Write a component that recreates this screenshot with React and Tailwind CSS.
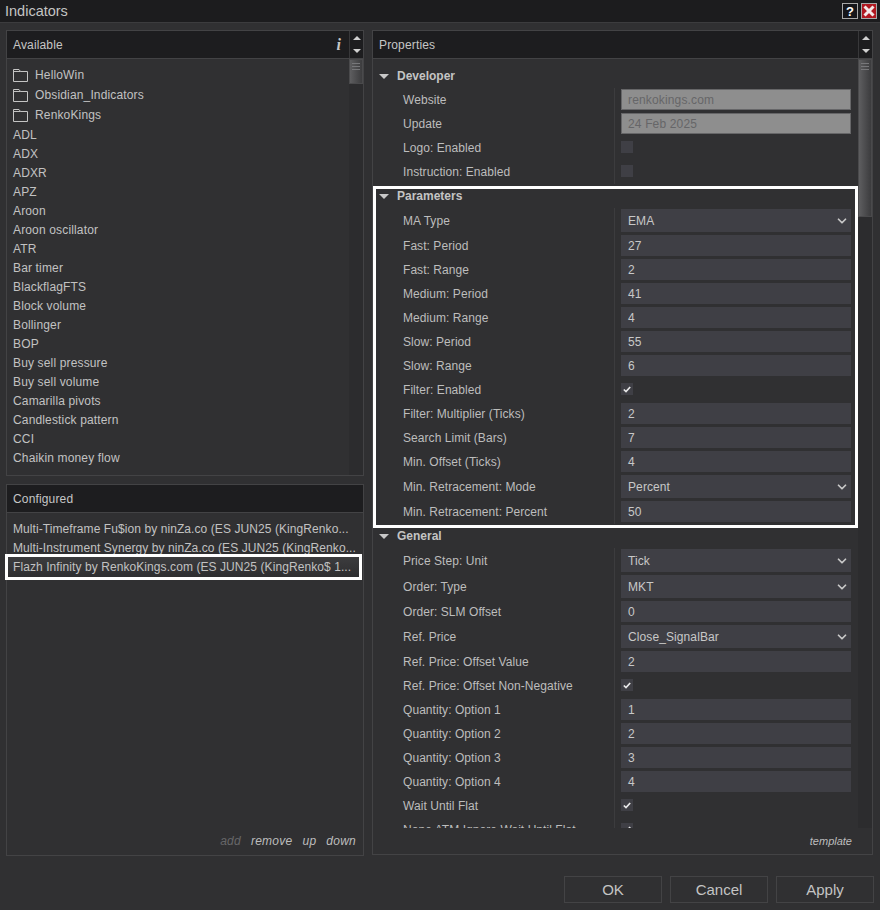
import { ChevronDown } from "lucide-react";

const available = [
  "ADL", "ADX", "ADXR", "APZ", "Aroon", "Aroon oscillator", "ATR", "Bar timer", "BlackflagFTS",
  "Block volume", "Bollinger", "BOP", "Buy sell pressure", "Buy sell volume", "Camarilla pivots",
  "Candlestick pattern", "CCI", "Chaikin money flow",
];

const developer = [
  { label: "Website", type: "disabled", value: "renkokings.com" },
  { label: "Update", type: "disabled", value: "24 Feb 2025" },
  { label: "Logo: Enabled", type: "check" },
  { label: "Instruction: Enabled", type: "check" },
];

const parameters = [
  { label: "MA Type", type: "select", value: "EMA" },
  { label: "Fast: Period", value: "27" },
  { label: "Fast: Range", value: "2" },
  { label: "Medium: Period", value: "41" },
  { label: "Medium: Range", value: "4" },
  { label: "Slow: Period", value: "55" },
  { label: "Slow: Range", value: "6" },
  { label: "Filter: Enabled", type: "check", checked: true },
  { label: "Filter: Multiplier (Ticks)", value: "2" },
  { label: "Search Limit (Bars)", value: "7" },
  { label: "Min. Offset (Ticks)", value: "4" },
  { label: "Min. Retracement: Mode", type: "select", value: "Percent" },
  { label: "Min. Retracement: Percent", value: "50" },
];

const general = [
  { label: "Price Step: Unit", type: "select", value: "Tick" },
  { label: "Order: Type", type: "select", value: "MKT" },
  { label: "Order: SLM Offset", value: "0" },
  { label: "Ref. Price", type: "select", value: "Close_SignalBar" },
  { label: "Ref. Price: Offset Value", value: "2" },
  { label: "Ref. Price: Offset Non-Negative", type: "check", checked: true },
  { label: "Quantity: Option 1", value: "1" },
  { label: "Quantity: Option 2", value: "2" },
  { label: "Quantity: Option 3", value: "3" },
  { label: "Quantity: Option 4", value: "4" },
  { label: "Wait Until Flat", type: "check", checked: true },
  { label: "None ATM Ignore Wait Until Flat", type: "check", checked: true },
];

function FolderIcon() {
  return (
    <svg width="15" height="14" viewBox="0 0 15 14" fill="none" stroke="#c4c4c4" strokeWidth="1" className="shrink-0">
      <path d="M0.5 13.5V1.5H6L7.5 3.5H14.5V13.5Z" />
      <path d="M0.5 3.5H7.5" />
    </svg>
  );
}

function Triangle() {
  return <div className="w-0 h-0 border-x-[5px] border-x-transparent border-t-[5px] border-t-[#c8c8c8]" />;
}

function ScrollArrows() {
  return (
    <div className="w-[14px] shrink-0 border-l border-[#38383a] flex flex-col items-center justify-center gap-[9px]">
      <div className="w-0 h-0 border-x-[4px] border-x-transparent border-b-[4px] border-b-[#d0d0d0]" />
      <div className="w-0 h-0 border-x-[4px] border-x-transparent border-t-[4px] border-t-[#d0d0d0]" />
    </div>
  );
}

function Thumb({ height }) {
  return (
    <div className="w-[14px] shrink-0 bg-[#2c2c2e]">
      <div
        className="w-[14px] border border-[#4a4a4c] bg-gradient-to-r from-[#5e5e60] to-[#3c3c3e] flex flex-col items-center gap-[2px] pt-[3px]"
        style={{ height }}
      >
        <div className="w-[8px] h-px bg-[#77777a]" />
        <div className="w-[8px] h-px bg-[#77777a]" />
        <div className="w-[8px] h-px bg-[#77777a]" />
      </div>
    </div>
  );
}

function PanelHeader({ title, arrows, children }) {
  return (
    <div className="h-[28px] shrink-0 flex bg-[#1d1d1f] border-b border-[#434345]">
      <div className="flex-1 flex items-center justify-between pl-[6px] pr-[8px] text-[#c6c6c6] tracking-[0.15px]">{title}{children}</div>
      {arrows && <ScrollArrows />}
    </div>
  );
}

function Value({ row }) {
  if (row.type === "check") {
    return (
      <div className="w-[12px] h-[12px] mb-[1px] bg-[#3f3f45] flex items-center justify-center">
        {row.checked && (
          <svg width="8" height="7" viewBox="0 0 8 7" fill="none" stroke="#e8e8e8" strokeWidth="1.7">
            <path d="M0.8 3.5L3 5.6L7.2 1" />
          </svg>
        )}
      </div>
    );
  }
  if (row.type === "disabled") {
    return (
      <div className="w-[230px] h-[21px] bg-[#8e8e8e] border border-[#666668] pl-[6px] flex items-center text-[#666668] tracking-[0.15px]">
        {row.value}
      </div>
    );
  }
  if (row.type === "select") {
    return (
      <div className="w-[230px] h-[23px] bg-[#3f3f45] pl-[7px] pr-[2px] flex items-center justify-between text-[#c8c8c8] tracking-[0.1px]">
        {row.value}
        <ChevronDown size={14} strokeWidth={3} color="#c8c8c8" />
      </div>
    );
  }
  return <div className="w-[230px] h-[21px] bg-[#3f3f45] pl-[7px] flex items-center text-[#c8c8c8]">{row.value}</div>;
}

function Row({ row }) {
  return (
    <div className={`flex items-stretch ${row.type === "select" ? "h-[26px]" : "h-[24px]"}`}>
      <div className="w-[241px] shrink-0 pl-[30px] flex items-center text-[#bdbdbd] whitespace-nowrap tracking-[0.06px]">{row.label}</div>
      <div className="flex-1 border-l border-[#3c3c3e] pl-[6px] pb-[1px] flex items-center">
        <Value row={row} />
      </div>
    </div>
  );
}

function Section({ title, rows }) {
  return (
    <div>
      <div className="h-[24px] flex items-center pl-[6px] gap-[8px]">
        <Triangle />
        <span className="font-bold text-[#c4c4c4]">{title}</span>
      </div>
      {rows.map((row) => (
        <Row key={row.label} row={row} />
      ))}
    </div>
  );
}

export default function App() {
  return (
    <div className="w-[880px] h-[910px] bg-[#303032] flex flex-col overflow-hidden text-[12px] font-['Liberation_Sans',Arial,sans-serif]">
      {/* title bar */}
      <div className="h-[23px] shrink-0 bg-[#1c1c1e] border-b border-[#3c3c3e] flex items-center justify-between pl-[5px] pr-[3px]">
        <span className="pt-[1px] text-[14.5px] text-[#c4c4c4]">Indicators</span>
        <div className="flex gap-[3px]">
          <div className="w-[16px] h-[16px] bg-[#16161a] border border-[#a8a8a8] flex items-center justify-center text-white font-bold text-[13px] leading-none">?</div>
          <div className="w-[16px] h-[16px] bg-[#b01820] border border-[#a8a8a8] flex items-center justify-center">
            <svg width="12" height="12" viewBox="0 0 12 12" stroke="#f4e8e8" strokeWidth="3">
              <path d="M1.5 1.5L10.5 10.5M10.5 1.5L1.5 10.5" />
            </svg>
          </div>
        </div>
      </div>

      <div className="h-[832px] shrink-0 flex gap-[8px] pl-[6px] pt-[7px]">
        {/* left column */}
        <div className="w-[358px] shrink-0 flex flex-col gap-[8px]">
          <div className="h-[446px] shrink-0 border border-[#434345] flex flex-col">
            <PanelHeader title="Available" arrows>
              <span className="font-['Liberation_Serif',serif] italic font-bold text-[16px]">i</span>
            </PanelHeader>
            <div className="flex-1 flex min-h-0">
              <div className="flex-1 pt-[6px] pl-[6px] text-[#c2c2c2] overflow-hidden tracking-[0.15px]">
                {["HelloWin", "Obsidian_Indicators", "RenkoKings"].map((name) => (
                  <div key={name} className="h-[20px] flex items-center gap-[7px]">
                    <FolderIcon />
                    {name}
                  </div>
                ))}
                {available.map((name) => (
                  <div key={name} className="h-[19px] flex items-center">{name}</div>
                ))}
              </div>
              <Thumb height={25} />
            </div>
          </div>

          <div className="h-[372px] shrink-0 border border-[#434345] flex flex-col">
            <PanelHeader title="Configured" />
            <div className="flex-1 pt-[6px] text-[#c2c2c2] tracking-[0.08px]">
              <div className="h-[19px] pl-[6px] flex items-center whitespace-nowrap">Multi-Timeframe Fu$ion by ninZa.co (ES JUN25 (KingRenko...</div>
              <div className="h-[19px] pl-[6px] flex items-center whitespace-nowrap">Multi-Instrument Synergy by ninZa.co (ES JUN25 (KingRenko...</div>
              <div className="h-[26px] -ml-[2px] mr-[1px] -my-[3px] relative pl-[5px] flex items-center whitespace-nowrap border-[3px] border-white bg-gradient-to-b from-[#3c3c3e] to-[#2e2e30]">
                Flazh Infinity by RenkoKings.com (ES JUN25 (KingRenko$ 1...
              </div>
            </div>
            <div className="h-[26px] shrink-0 flex items-center justify-end gap-[10px] pr-[7px] pb-[2px] italic text-[#bdbdbd] tracking-[0.25px]">
              <span className="text-[#666668]">add</span>
              <span>remove</span>
              <span>up</span>
              <span>down</span>
            </div>
          </div>
        </div>

        {/* properties */}
        <div className="relative w-[501px] h-[825px] shrink-0 border border-[#434345] flex flex-col">
          <PanelHeader title="Properties" arrows />
          <div className="h-[769px] shrink-0 flex">
            <div className="flex-1 pt-[5px] overflow-hidden">
              <Section title="Developer" rows={developer} />
              <Section title="Parameters" rows={parameters} />
              <Section title="General" rows={general} />
            </div>
            <Thumb height={158} />
          </div>
          <div className="flex-1 flex items-center justify-end pr-[20px] italic text-[11px] text-[#bdbdbd]">template</div>

          {/* highlight around the parameters group */}
          <div className="absolute left-[0px] top-[155px] w-[485px] h-[342px] border-[3px] border-white pointer-events-none" />
        </div>
      </div>

      {/* footer buttons */}
      <div className="flex-1 flex justify-end gap-[8px] pr-[6px] pt-[21px]">
        {["OK", "Cancel", "Apply"].map((label) => (
          <div key={label} className="w-[98px] h-[27px] border border-[#434345] flex items-center justify-center pt-[1px] text-[15px] text-[#c4c4c4]">
            {label}
          </div>
        ))}
      </div>
    </div>
  );
}
